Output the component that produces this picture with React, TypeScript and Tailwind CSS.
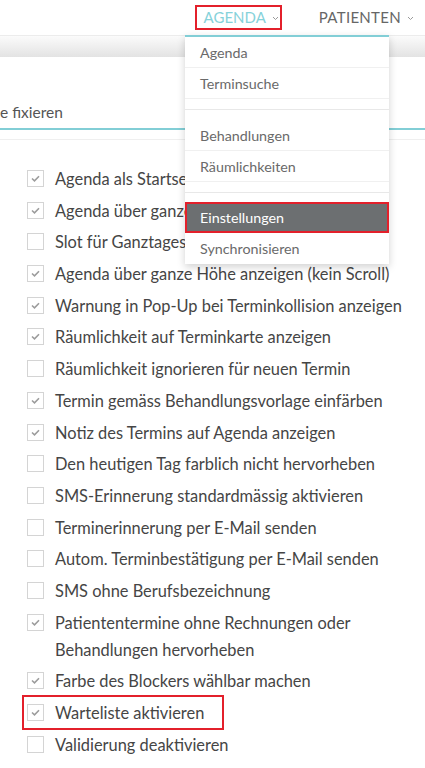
import React from "react";

type Option = { label: React.ReactNode; checked: boolean; highlight?: boolean };

const options: Option[] = [
  { label: "Agenda als Startseite", checked: true },
  { label: "Agenda über ganze Woche anzeigen", checked: true },
  { label: "Slot für Ganztagestermine", checked: false },
  { label: "Agenda über ganze Höhe anzeigen (kein Scroll)", checked: true },
  { label: "Warnung in Pop-Up bei Terminkollision anzeigen", checked: true },
  { label: "Räumlichkeit auf Terminkarte anzeigen", checked: true },
  { label: "Räumlichkeit ignorieren für neuen Termin", checked: false },
  { label: "Termin gemäss Behandlungsvorlage einfärben", checked: true },
  { label: "Notiz des Termins auf Agenda anzeigen", checked: true },
  { label: "Den heutigen Tag farblich nicht hervorheben", checked: false },
  { label: "SMS-Erinnerung standardmässig aktivieren", checked: false },
  { label: "Terminerinnerung per E-Mail senden", checked: false },
  { label: "Autom. Terminbestätigung per E-Mail senden", checked: false },
  { label: "SMS ohne Berufsbezeichnung", checked: false },
  {
    label: (
      <>
        Patiententermine ohne Rechnungen oder
        <br />
        Behandlungen hervorheben
      </>
    ),
    checked: true,
  },
  { label: "Farbe des Blockers wählbar machen", checked: true },
  { label: "Warteliste aktivieren", checked: true, highlight: true },
  { label: "Validierung deaktivieren", checked: false },
];

const Chevron = () => (
  <svg width="7" height="5" viewBox="0 0 7 5" className="ml-[6px] mt-[2px]">
    <polyline points="1,1 3.5,3.5 6,1" fill="none" stroke="#9a9a9a" strokeWidth="1" />
  </svg>
);

const Checkbox = ({ checked }: { checked: boolean }) => (
  <span className="flex h-[17px] w-[17px] shrink-0 items-center justify-center border border-[#d4d4d4] bg-white">
    {checked && (
      <svg width="9" height="7" viewBox="0 0 9 7">
        <polyline points="1,3.5 3.5,5.8 8,1.2" fill="none" stroke="#9c9c9c" strokeWidth="1.6" />
      </svg>
    )}
  </span>
);

const MenuItem = ({ label, active, border = true }: { label: string; active?: boolean; border?: boolean }) =>
  active ? (
    <div className="flex h-[31px] items-center border-2 border-[#e3202b] bg-[#6c6f71] pl-[13px] pt-[1px] text-[14.3px] text-white">
      {label}
    </div>
  ) : (
    <div
      className={
        "flex h-[31px] items-center pl-[15px] pt-[1px] text-[14.3px] text-[#6a6a6a] " +
        (border ? "border-b border-[#f0f0f0]" : "")
      }
    >
      {label}
    </div>
  );

const Divider = ({ top }: { top: string }) => (
  <div className={top}>
    <div className="border-b border-[#e8e8e8]" />
  </div>
);

export default function App() {
  return (
    <div
      className="relative h-[768px] w-[425px] overflow-hidden bg-white text-[#454545]"
      style={{ fontFamily: "Lato, 'Open Sans', sans-serif" }}
    >
      <header className="flex h-[35px] items-center justify-end pr-[11px]">
        <div className="mr-[37px] flex h-[25px] items-center border-2 border-[#e3202b] pl-[7px] pr-[1px]">
          <span className="text-[15px] text-[#86d2da]">AGENDA</span>
          <Chevron />
        </div>
        <div className="flex items-center">
          <span className="text-[15px] tracking-[0.3px] text-[#666]">PATIENTEN</span>
          <Chevron />
        </div>
      </header>

      <div className="h-[22px] border-t border-[#ececec] bg-gradient-to-b from-[#fbfbfb] to-[#e3e3e3]" />

      <div className="flex h-[73px] items-end border-b-2 border-[#82ced6] pb-[4px]">
        <span className="text-[15.5px] text-[#555]">e fixieren</span>
      </div>
      <div className="h-[10px] border-b border-[#efefef]" />

      <ul className="flex flex-col gap-[4.7px] pl-[27px] pt-[25px]">
        {options.map((o, i) => (
          <li key={i} className="relative flex items-start text-[16.4px] leading-[27px]">
            {o.highlight && (
              <span className="pointer-events-none absolute -bottom-[4px] -left-[5px] -top-[4px] w-[202px] border-2 border-[#e3202b]" />
            )}
            <span className="mt-[5px]">
              <Checkbox checked={o.checked} />
            </span>
            <span className="ml-[11px]">{o.label}</span>
          </li>
        ))}
      </ul>

      <div className="absolute left-[185px] top-[35px] w-[204px] border-t-2 border-[#82ced6] bg-white shadow-[0_3px_8px_rgba(0,0,0,0.18)]">
        <MenuItem label="Agenda" />
        <MenuItem label="Terminsuche" />
        <Divider top="h-[21px] pt-[10px]" />
        <MenuItem label="Behandlungen" />
        <MenuItem label="Räumlichkeiten" />
        <Divider top="h-[20px] pt-[10px]" />
        <MenuItem label="Einstellungen" active />
        <MenuItem label="Synchronisieren" border={false} />
      </div>
    </div>
  );
}
